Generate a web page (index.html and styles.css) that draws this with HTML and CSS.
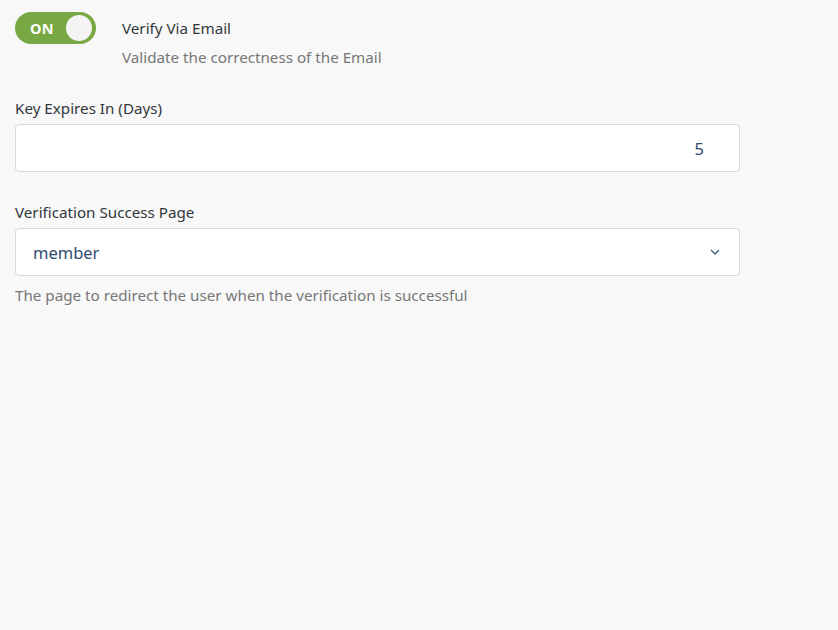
FILE: index.html
```html
<!DOCTYPE html>
<html>
<head>
<meta charset="utf-8">
<link rel="stylesheet" href="styles.css">
</head>
<body>
<div class="page">
  <div class="toggle-row">
    <div class="toggle on">
      <span class="toggle-label">ON</span>
      <span class="knob"></span>
    </div>
    <div class="toggle-text">
      <div class="toggle-title">Verify Via Email</div>
      <div class="toggle-desc">Validate the correctness of the Email</div>
    </div>
  </div>

  <div class="field field-first">
    <label class="field-label">Key Expires In (Days)</label>
    <div class="input number">5</div>
  </div>

  <div class="field">
    <label class="field-label">Verification Success Page</label>
    <div class="input select">
      <span>member</span>
      <svg class="chevron" width="10" height="6" viewBox="0 0 10 6"><path d="M1 1l4 4 4-4" fill="none" stroke="#3b5a86" stroke-width="1.3"/></svg>
    </div>
    <div class="help">The page to redirect the user when the verification is successful</div>
  </div>
</div>
</body>
</html>
```
FILE: styles.css
```css
html, body {
  margin: 0;
  padding: 0;
  background: #f8f8f8;
}
body {
  font-family: "Noto Sans", "Open Sans", sans-serif;
  color: #32373c;
}
.page {
  padding: 12px 15px;
  width: 725px;
}
.toggle-row {
  display: flex;
  align-items: flex-start;
  gap: 26px;
}
.toggle {
  width: 81px;
  height: 32px;
  border-radius: 16px;
  background: #78a843;
  display: flex;
  align-items: center;
  justify-content: space-between;
  padding: 0 4px 0 15px;
  box-sizing: border-box;
  flex: none;
}
.toggle-label {
  color: #fff;
  font-weight: 700;
  font-size: 14.5px;
  letter-spacing: 0.2px;
}
.knob {
  width: 26px;
  height: 26px;
  border-radius: 50%;
  background: #f4f4f4;
}
.toggle-text {
  padding-top: 5px;
}
.toggle-title {
  font-size: 15.2px;
  line-height: 22px;
  color: #32373c;
}
.toggle-desc {
  font-size: 15.2px;
  line-height: 20px;
  margin-top: 8px;
  color: #777;
}
.field {
  margin-top: 30px;
}
.field-first {
  margin-top: 31px;
}
.field-label {
  display: block;
  font-size: 15.2px;
  line-height: 20px;
  margin-bottom: 6px;
  color: #32373c;
}
.input {
  height: 48px;
  box-sizing: border-box;
  background: #fff;
  border: 1px solid #d8d8d8;
  border-radius: 4px;
  display: flex;
  align-items: center;
  font-size: 16.5px;
  color: #2e4a6e;
}
.number {
  justify-content: flex-end;
  padding-right: 35px;
}
.select {
  justify-content: space-between;
  padding: 0 19px 0 17px;
}
.chevron {
  display: block;
}
.help {
  margin-top: 9px;
  font-size: 15.2px;
  line-height: 20px;
  color: #777;
}
```
